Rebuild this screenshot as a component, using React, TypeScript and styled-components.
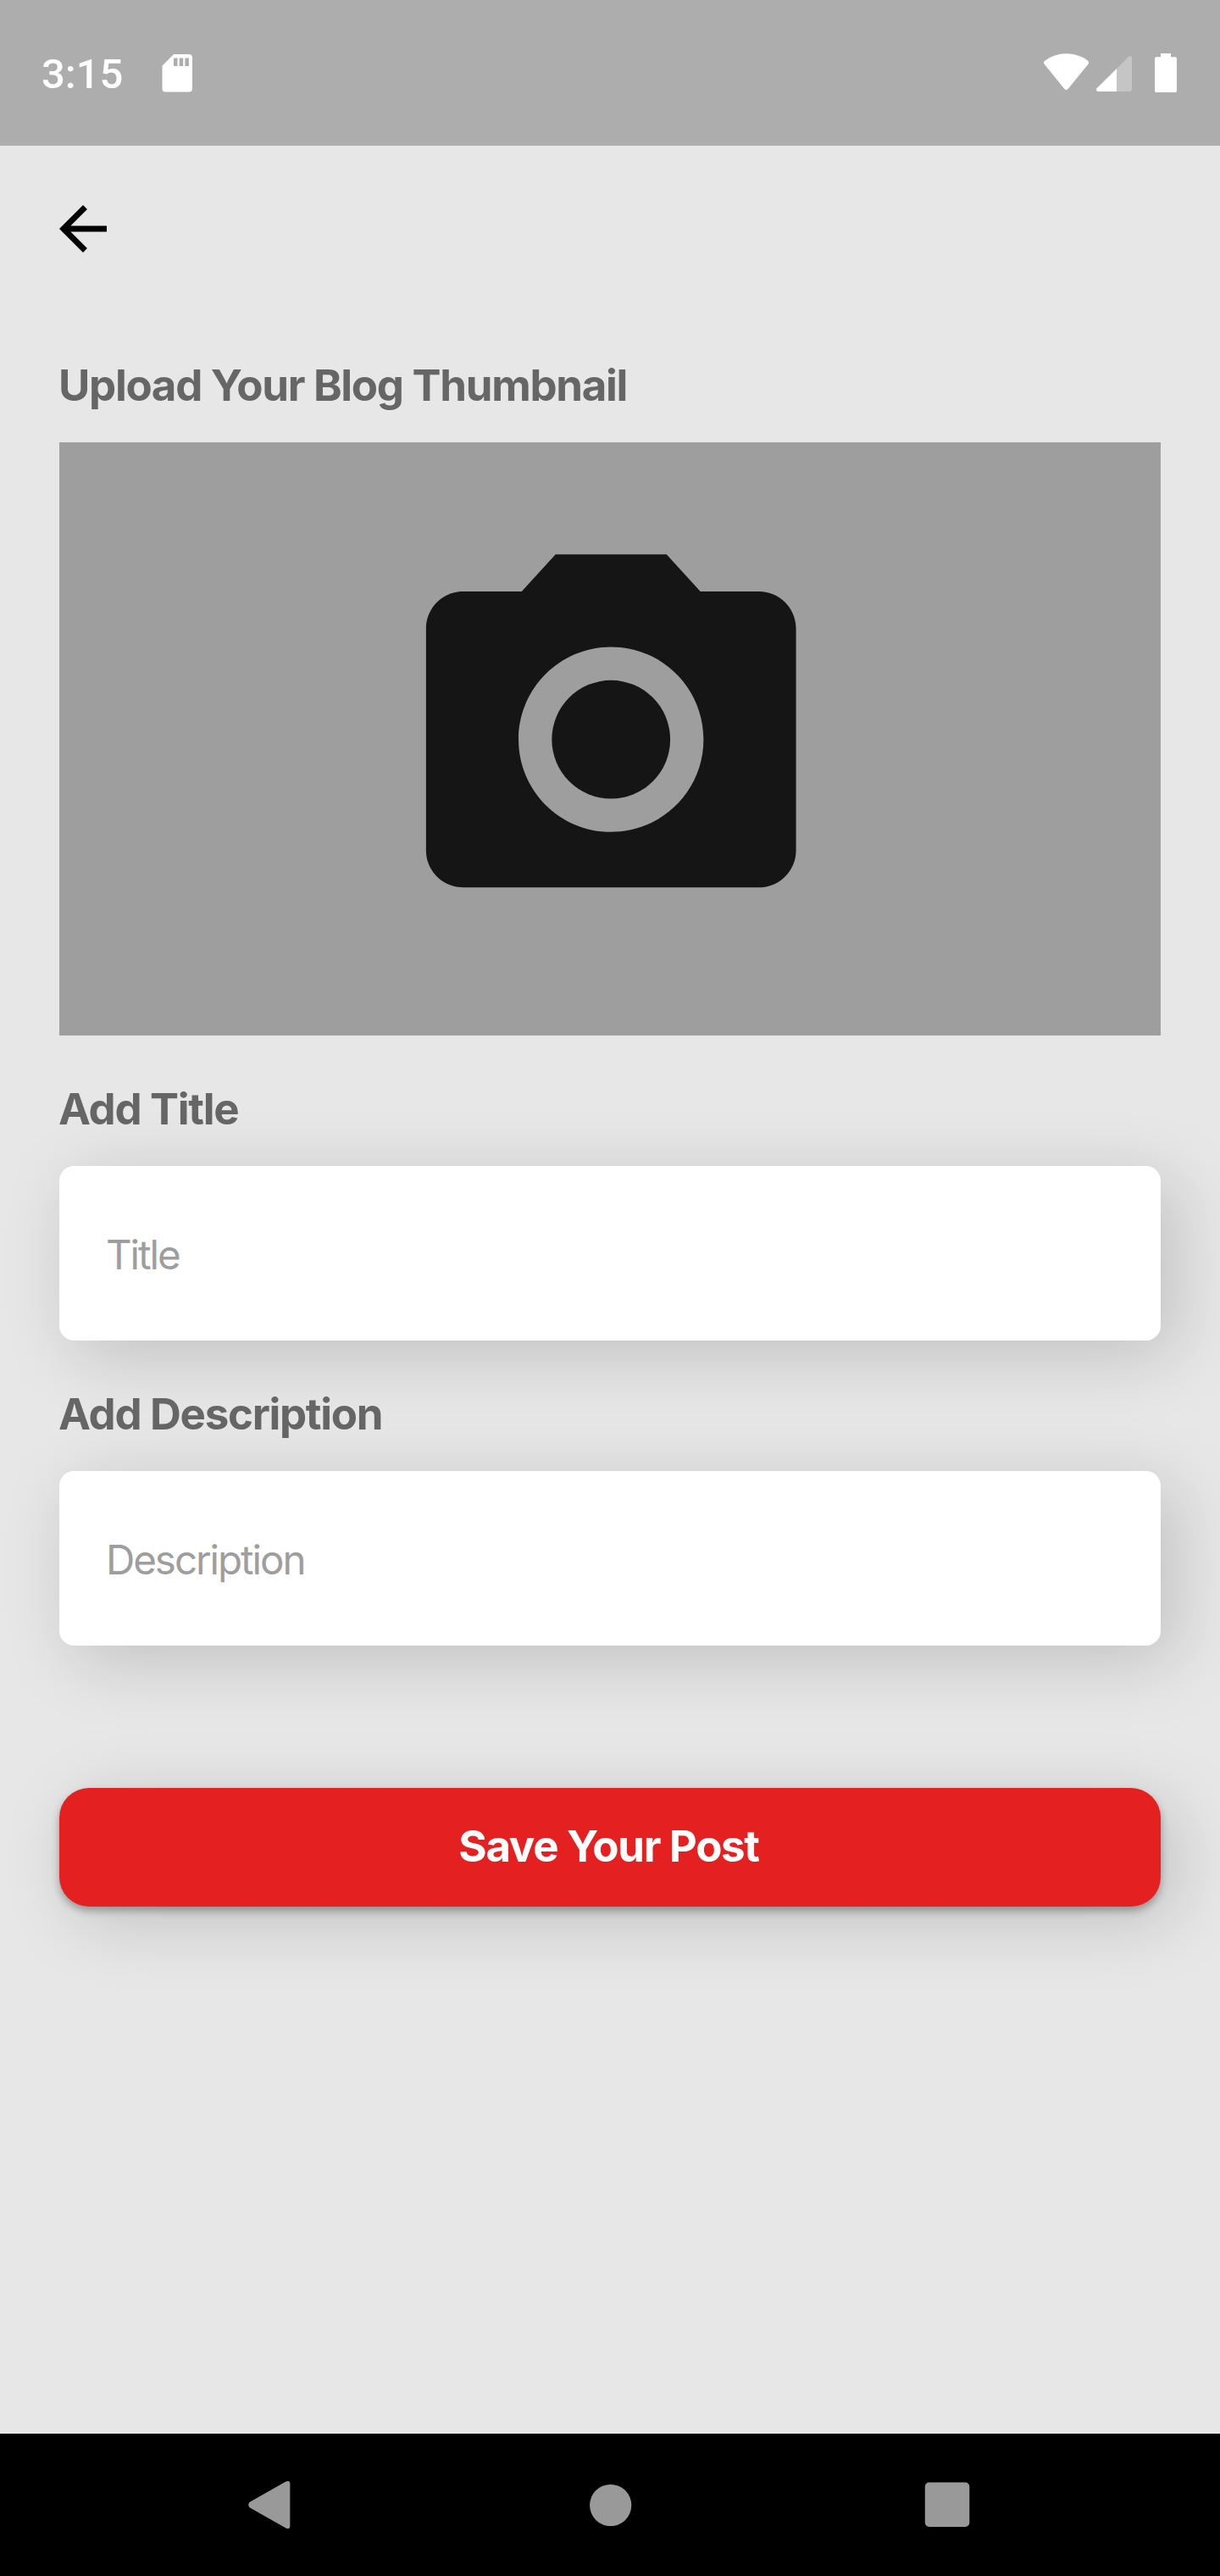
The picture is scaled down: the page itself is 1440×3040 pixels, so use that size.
import React from "react";
import styled, { createGlobalStyle } from "styled-components";

const GlobalStyle = createGlobalStyle`
  * { box-sizing: border-box; }
  body { margin: 0; background: #e7e7e7; }
`;

const Screen = styled.div`
  display: flex;
  flex-direction: column;
  width: 1440px;
  height: 3040px;
  overflow: hidden;
  background: #e7e7e7;
  font-family: Inter, "Liberation Sans", sans-serif;
`;

const StatusBar = styled.header`
  display: flex;
  align-items: flex-start;
  justify-content: space-between;
  height: 172px;
  padding: 60px 48px 0 49px;
  background: #adadad;
  color: #fff;
`;

const StatusGroup = styled.div`
  display: flex;
  align-items: flex-start;
  height: 56px;
`;

const Clock = styled.span`
  width: 142px;
  font: 500 49px/56px Roboto, sans-serif;
`;

const Glyph = styled.svg`
  display: block;
  flex: none;
`;

const Content = styled.main`
  display: flex;
  flex-direction: column;
  flex: 1;
  padding: 56px 70px 0;
`;

const BackButton = styled.button`
  width: 84px;
  height: 84px;
  margin-left: -14px;
  padding: 0;
  border: 0;
  background: none;
`;

const Label = styled.label<{ $top: number }>`
  height: 62px;
  margin-top: ${(p) => p.$top}px;
  margin-left: -1px;
  color: #666;
  font-size: 51px;
  font-weight: 700;
  line-height: 62px;
  letter-spacing: -1.3px;
  white-space: nowrap;
`;

const Thumbnail = styled.div`
  display: flex;
  justify-content: center;
  height: 699.5px;
  margin-top: 36px;
  padding: 88px 0 0 2px;
  background: #9e9e9e;
`;

const Input = styled.input`
  width: 100%;
  height: 206px;
  margin-top: 35.5px;
  padding: 4px 55px 0;
  border: 0;
  border-radius: 17.5px;
  outline: 0;
  background: #fff;
  box-shadow: 17px 17px 84px rgba(0, 0, 0, 0.17);
  font-family: inherit;
  font-size: 47.5px;
  letter-spacing: -2.05px;
  &::placeholder {
    color: #9e9e9e;
    opacity: 1;
  }
`;

const SaveButton = styled.button`
  height: 140px;
  margin-top: 168px;
  padding: 0 3px 2px 0;
  border: 0;
  border-radius: 35px;
  background: #e52020;
  box-shadow: 0 5px 10px rgba(0, 0, 0, 0.3), 17px 17px 84px rgba(0, 0, 0, 0.17);
  color: #fff;
  font-family: inherit;
  font-size: 51px;
  font-weight: 700;
  letter-spacing: -1.33px;
`;

const NavBar = styled.nav`
  display: flex;
  align-items: center;
  justify-content: space-between;
  height: 168px;
  padding: 0 295px 0 293px;
  background: #000;
`;

export default function App() {
  return (
    <Screen>
      <GlobalStyle />
      <StatusBar>
        <StatusGroup>
          <Clock>3:15</Clock>
          <Glyph width="37" height="56" viewBox="191 60 37 56" fill="#fff">
            <path
              fillRule="evenodd"
              d="M205 64H223Q227 64 227 68V104.500Q227 108.500 223 108.500H195.500Q191.500 108.500 191.500 104.500V77.500ZM205 68.500V78H209.500V68.500ZM211.700 68.500V78H216.200V68.500ZM218.400 68.500V78H222.900V68.500Z"
            />
          </Glyph>
        </StatusGroup>
        <StatusGroup>
          <Glyph width="160" height="56" viewBox="1232 60 160 56" fill="#fff">
            <path d="M1232.900 72Q1231.200 74.200 1232.900 76L1256 104.500Q1258.500 107.500 1261 104.500L1284.200 76Q1285.900 74 1284.200 71.700Q1273 63.300 1258.500 63.300T1232.900 72Z" />
            <path
              opacity=".3"
              d="M1318 81L1332 67Q1336 64.500 1336 68.500V105Q1336 108 1333 108H1318Z"
            />
            <path d="M1318 81V108H1296Q1293 107 1294.500 104.200Z" />
            <path d="M1370 63H1382V67.300H1387Q1389 67.300 1389 69.300V107Q1389 109 1387 109H1365Q1363 109 1363 107V69.300Q1363 67.300 1365 67.300H1370Z" />
          </Glyph>
        </StatusGroup>
      </StatusBar>
      <Content>
        <BackButton aria-label="Back">
          <Glyph width="84" height="84" viewBox="0 0 24 24">
            <path d="M20 11H7.830l5.590-5.590L12 4l-8 8 8 8 1.410-1.410L7.830 13H20v-2z" />
          </Glyph>
        </BackButton>
        <Label $top={112}>Upload Your Blog Thumbnail</Label>
        <Thumbnail>
          <Glyph width="524" height="524" viewBox="-0.01 -0.03 24 24" fill="#151515">
            <circle cx="12" cy="12" r="3.2" />
            <path d="M9 2 7.170 4H4c-1.100 0-2 .9-2 2v12c0 1.100.9 2 2 2h16c1.100 0 2-.9 2-2V6c0-1.100-.9-2-2-2h-3.170L15 2H9zm3 15c-2.760 0-5-2.240-5-5s2.240-5 5-5 5 2.240 5 5-2.240 5-5 5z" />
          </Glyph>
        </Thumbnail>
        <Label $top={56.5} htmlFor="title">Add Title</Label>
        <Input id="title" placeholder="Title" />
        <Label $top={56.5} htmlFor="description">Add Description</Label>
        <Input id="description" placeholder="Description" />
        <SaveButton>Save Your Post</SaveButton>
      </Content>
      <NavBar>
        <Glyph width="50" height="58" viewBox="293 2927 50 58" fill="#999">
          <path d="M294.300 2953L337.500 2928.500Q342.300 2926.500 342.300 2931V2981Q342.300 2985.500 337.500 2983.500L294.300 2959Q292.300 2956 294.300 2953Z" />
        </Glyph>
        <Glyph width="58" height="50" viewBox="0 0 58 50" fill="#999">
          <circle cx="32.700" cy="25.500" r="24.600" />
        </Glyph>
        <Glyph width="54" height="54" viewBox="0 0 54 54" fill="#999">
          <rect x=".8" y=".5" width="52.500" height="52.500" rx="5" />
        </Glyph>
      </NavBar>
    </Screen>
  );
}
